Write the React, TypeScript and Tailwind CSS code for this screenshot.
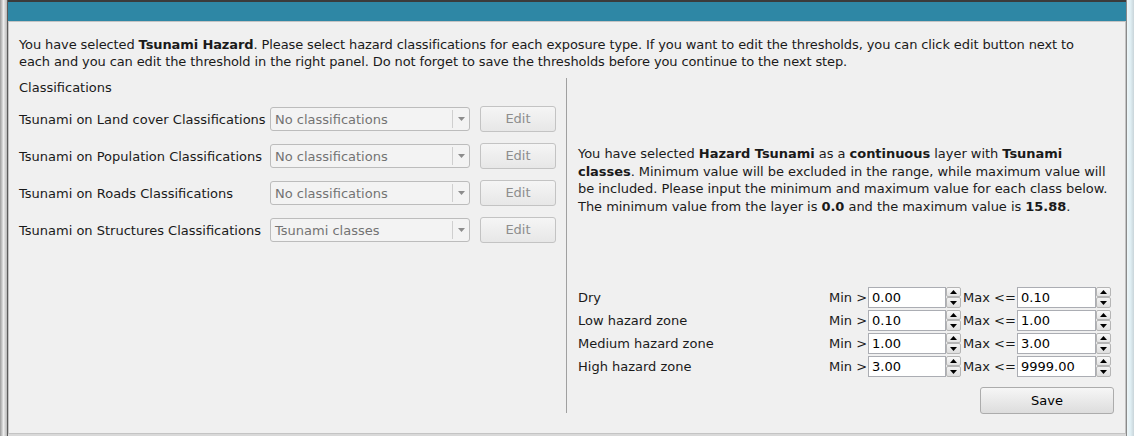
import React from 'react';

const font = { fontFamily: '"DejaVu Sans", Verdana, sans-serif' };

const exposures = [
  { label: 'Tsunami on Land cover Classifications', value: 'No classifications' },
  { label: 'Tsunami on Population Classifications', value: 'No classifications' },
  { label: 'Tsunami on Roads Classifications', value: 'No classifications' },
  { label: 'Tsunami on Structures Classifications', value: 'Tsunami classes' },
];

const classes = [
  { name: 'Dry', min: '0.00', max: '0.10' },
  { name: 'Low hazard zone', min: '0.10', max: '1.00' },
  { name: 'Medium hazard zone', min: '1.00', max: '3.00' },
  { name: 'High hazard zone', min: '3.00', max: '9999.00' },
];

function ComboBox({ value }: { value: string }) {
  return (
    <div className="w-[200px] h-[24px] rounded-[3px] border border-[#bcbcbc] bg-[#f3f3f3] flex items-center text-[#737373]">
      <span className="flex-1 pl-[4px] pt-[1px] whitespace-nowrap">{value}</span>
      <div className="w-[17px] h-[18px] border-l border-[#cfcfcf] flex items-center justify-center">
        <svg width="7" height="4" viewBox="0 0 7 4">
          <path d="M0 0 L7 0 L3.5 4 Z" fill="#8c8c8c" />
        </svg>
      </div>
    </div>
  );
}

function SpinBox({ value, width }: { value: string; width: string }) {
  return (
    <div className="flex h-[21px]">
      <div className={`${width} h-[21px] border border-[#abadb3] bg-white flex items-center pl-[3px] pt-[1px] text-black whitespace-nowrap`}>
        {value}
      </div>
      <div className="w-[15px] h-[21px] flex flex-col">
        <div className="h-[10px] rounded-[2px] border border-[#b5b5b5] bg-linear-to-b from-[#fafafa] to-[#e3e3e3] flex items-center justify-center">
          <svg width="7" height="4" viewBox="0 0 7 4">
            <path d="M0 4 L7 4 L3.5 0 Z" fill="#000" />
          </svg>
        </div>
        <div className="h-[11px] rounded-[2px] border border-[#b5b5b5] bg-linear-to-b from-[#f3f3f3] to-[#dedede] flex items-center justify-center">
          <svg width="7" height="4" viewBox="0 0 7 4">
            <path d="M0 0 L7 0 L3.5 4 Z" fill="#000" />
          </svg>
        </div>
      </div>
    </div>
  );
}

export default function App() {
  return (
    <div className="w-[1134px] h-[436px] flex bg-[#d9d9d9] overflow-hidden text-[13px] text-[#1a1a1a]" style={font}>
      {/* left window edge */}
      <div className="w-[7px] h-full bg-linear-to-r from-[#9a9a9a] via-[#ececec] to-[#b8b8b8]" />
      <div className="w-[1px] h-full bg-[#5a5a5a]" />

      <div className="w-[1118px] flex flex-col">
        <div className="h-[2px] bg-[#3b3b3b]" />
        <div className="h-[19px] bg-[#2e87a5]" />

        <div className="h-[413px] border border-[#c4c4c4] bg-[#f0f0f0]">
          <p className="pt-[14px] pl-[10px] leading-[17px] tracking-[-0.11px] whitespace-nowrap">
            You have selected <b>Tsunami Hazard</b>. Please select hazard classifications for each exposure type. If you want to edit the thresholds, you can click edit button next to
            <br />
            each and you can edit the threshold in the right panel. Do not forget to save the thresholds before you continue to the next step.
          </p>

          <div className="mt-[8px] flex">
            {/* Left: exposure classifications */}
            <div className="w-[557px] h-[335px] pl-[10px]">
              <div className="leading-[17px] pt-[1px]">Classifications</div>
              <div className="mt-[10px] flex flex-col gap-[11px]">
                {exposures.map((item) => (
                  <div key={item.label} className="h-[26px] flex items-center">
                    <span className="w-[251px] pt-[1px] whitespace-nowrap">{item.label}</span>
                    <ComboBox value={item.value} />
                    <button className="ml-[10px] w-[76px] h-[26px] rounded-[3px] border border-[#c3c3c3] bg-linear-to-b from-[#f5f5f5] to-[#e7e7e7] text-[#8d8d8d]">
                      Edit
                    </button>
                  </div>
                ))}
              </div>
            </div>

            {/* Right: threshold editor */}
            <div className="w-[559px] h-[335px] border-l border-[#a0a0a0] pl-[11px] flex flex-col">
              <p className="mt-[67px] leading-[17.5px] tracking-[-0.04px] whitespace-nowrap">
                You have selected <b>Hazard Tsunami</b> as a <b>continuous</b> layer with <b>Tsunami</b>
                <br />
                <b>classes</b>. Minimum value will be excluded in the range, while maximum value will
                <br />
                be included. Please input the minimum and maximum value for each class below.
                <br />
                The minimum value from the layer is <b>0.0</b> and the maximum value is <b>15.88</b>.
              </p>

              <div className="mt-[71px] flex flex-col">
                {classes.map((c) => (
                  <div key={c.name} className="h-[23px] flex items-center">
                    <span className="w-[251px] pt-[1px] whitespace-nowrap">{c.name}</span>
                    <span className="w-[39px] pt-[1px] whitespace-nowrap">Min &gt;</span>
                    <SpinBox value={c.min} width="w-[78px]" />
                    <span className="w-[56px] pl-[2px] pt-[1px] whitespace-nowrap">Max &lt;=</span>
                    <SpinBox value={c.max} width="w-[79px]" />
                  </div>
                ))}
              </div>

              <div className="mt-[9px] flex justify-end pr-[11px]">
                <button className="w-[134px] h-[27px] rounded-[3px] border border-[#acacac] bg-linear-to-b from-[#f6f6f6] to-[#dddddd] text-black">
                  Save
                </button>
              </div>
            </div>
          </div>
        </div>
      </div>

      {/* right window edge */}
      <div className="w-[1px] h-full bg-[#8a8a8a]" />
      <div className="w-[7px] h-full bg-linear-to-r from-[#eef6f8] via-[#dfeef3] to-[#c9d5da]" />
    </div>
  );
}
